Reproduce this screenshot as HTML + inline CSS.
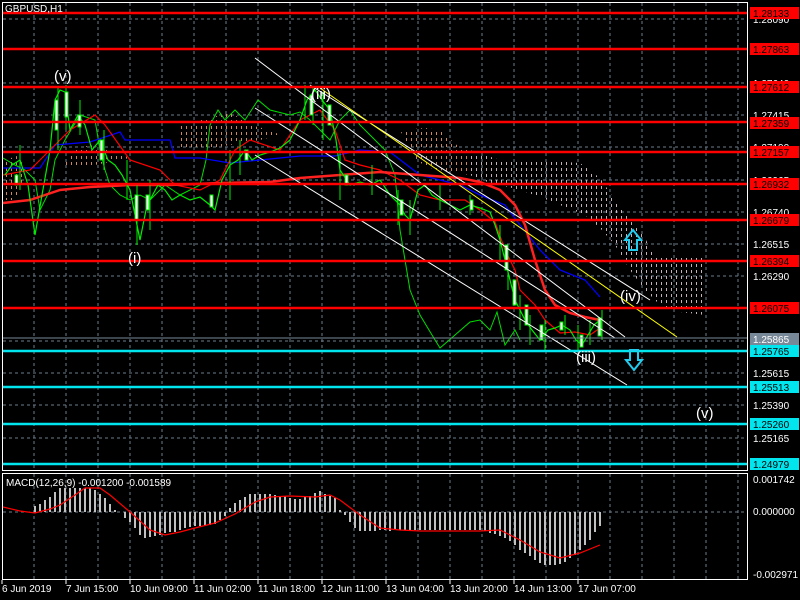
<!DOCTYPE html>
<html><head><meta charset="utf-8"><style>
html,body{margin:0;padding:0;background:#000;width:800px;height:600px;overflow:hidden;font-family:"Liberation Sans",sans-serif}
svg text{font-family:"Liberation Sans",sans-serif}
</style></head><body>
<svg width="800" height="600" xmlns="http://www.w3.org/2000/svg">
<defs>
<pattern id="pw" width="5" height="6" patternUnits="userSpaceOnUse"><rect x="1" y="0" width="1" height="3" fill="#e6d0dc"/></pattern>
<pattern id="po" width="5" height="6" patternUnits="userSpaceOnUse"><rect x="1" y="0" width="1" height="3" fill="#f0a070"/></pattern>
</defs>
<rect width="800" height="600" fill="#000"/>
<!-- grid -->
<g stroke="#6b7b8c" stroke-dasharray="3,3" stroke-width="1">
<path d="M34 3V470M66 3V470M98 3V470M130 3V470M162 3V470M194 3V470M226 3V470M258 3V470M290 3V470M322 3V470M354 3V470M386 3V470M418 3V470M450 3V470M482 3V470M514 3V470M546 3V470M578 3V470M610 3V470M642 3V470M674 3V470M706 3V470M738 3V470"/>
<path d="M34 474V579M66 474V579M98 474V579M130 474V579M162 474V579M194 474V579M226 474V579M258 474V579M290 474V579M322 474V579M354 474V579M386 474V579M418 474V579M450 474V579M482 474V579M514 474V579M546 474V579M578 474V579M610 474V579M642 474V579M674 474V579M706 474V579M738 474V579"/>
<path d="M3 19H747M3 83H747M3 115H747M3 147H747M3 180H747M3 212H747M3 244H747M3 276H747M3 341H747M3 373H747M3 405H747M3 438H747M3 512H747"/>
</g>
<!-- ichimoku cloud -->
<path d="M470 150 L500 160 L540 160 L580 163 L600 178 L615 200 L630 220 L645 238 L655 258 L705 258 L705 315 L680 312 L660 305 L645 290 L630 270 L615 245 L600 228 L585 215 L560 205 L540 197 L520 190 L500 185 L480 180 L470 175Z" fill="url(#pw)" opacity="0.85"/>
<path d="M400 130 L425 128 L440 130 L460 148 L470 150 L470 175 L450 172 L430 168 L415 160Z M180 125 L210 118 L230 112 L250 125 L270 130 L280 135 L260 140 L230 145 L200 150 L180 148Z M60 168 L75 150 L90 145 L110 150 L130 158 L110 162 L80 168Z M5 160 L20 155 L25 175 L15 200 L5 200Z" fill="url(#po)" opacity="0.85"/>
<!-- chikou (green line) -->
<polyline fill="none" stroke="#00dd00" stroke-width="1" points="3,158 15,165 25,170 35,180 40,210 50,190 55,160 65,140 80,115 95,120 100,150 105,170 110,185 120,195 130,200 140,195 150,200 165,185 180,195 200,185 206,160 210,125 218,110 225,120 235,110 245,120 258,100 270,110 290,115 300,112 310,120 320,130 330,140 340,120 350,110 360,125 370,135 385,150 395,175 400,230 405,260 410,290 420,315 432,335 440,348 455,335 470,322 480,320 490,330 497,312 505,345 515,330 520,340"/>
<!-- tenkan/kijun -->
<polyline fill="none" stroke="#0000ff" stroke-width="1.3" points="3,168 40,168 55,145 90,142 120,132 125,140 170,140 175,158 200,158 230,163 260,160 300,156 335,156 360,150 390,152 420,175 460,185 480,195 505,205 520,225 540,250 560,270 585,280 600,297"/>
<polyline fill="none" stroke="#ff0000" stroke-width="1.2" points="3,175 30,170 50,150 70,130 95,115 105,125 130,160 160,170 175,185 200,190 220,180 235,150 250,140 280,150 300,120 320,110 335,130 345,160 360,165 380,170 400,180 420,195 440,200 465,200 480,210 495,222 505,250 515,270 520,290 535,305 545,320 560,333 575,332 590,335 600,328"/>
<polyline fill="none" stroke="#ff2020" stroke-width="2.5" points="3,203 30,200 60,190 90,187 130,185 170,185 220,183 270,182 300,178 340,175 380,172 420,175 460,178 480,182 500,190 515,205 525,225 535,260 545,290 555,305 570,313 585,317 600,320"/>
<!-- candles (approx) -->
<polyline fill="none" stroke="#00ee00" stroke-width="1.2" points="5,175 12,165 20,160 28,185 35,235 42,195 50,150 55,100 60,90 65,92 70,130 78,115 85,125 92,150 100,140 108,160 115,165 122,175 130,190 135,215 140,240 146,210 150,200 158,185 165,190 172,200 180,195 190,200 200,197 210,205 215,210 222,180 230,165 238,160 245,150 252,160 260,155 270,152 280,148 290,140 300,120 307,100 315,90 322,100 330,110 336,140 340,170 350,185 360,182 370,185 380,180 390,195 400,205 405,215 410,220 418,190 425,185 432,195 440,200 450,205 460,210 470,205 480,208 490,212 495,225 500,240 505,260 510,280 515,300 520,310 525,320 532,330 540,340 548,330 555,328 562,325 570,330 576,340 582,345 588,335 594,325 600,320"/>
<g stroke="#00ee00" stroke-width="1"><path d="M20 145V190M58 88V150M66 85V130M80 100V135M104 130V170M127 160V200M137 185V245M150 180V230M230 150V200M240 140V175M305 85V120M313 88V125M323 92V140M340 150V200M372 165V195M398 190V225M410 200V235M440 185V210M470 195V215M500 225V260M508 250V290M520 295V330M530 315V345M545 320V350M565 315V335M578 325V350M590 320V345M602 310V340"/></g>
<g fill="#fff" stroke="#00ee00" stroke-width="1">
<rect x="15" y="175" width="3" height="10"/><rect x="55" y="100" width="3" height="30"/><rect x="65" y="92" width="3" height="25"/><rect x="78" y="115" width="3" height="12"/><rect x="100" y="140" width="3" height="20"/><rect x="135" y="195" width="3" height="25"/><rect x="146" y="195" width="3" height="15"/><rect x="210" y="195" width="3" height="12"/><rect x="245" y="150" width="3" height="10"/><rect x="310" y="95" width="3" height="20"/><rect x="328" y="105" width="3" height="20"/><rect x="345" y="175" width="3" height="10"/><rect x="400" y="200" width="3" height="15"/><rect x="470" y="200" width="3" height="10"/><rect x="505" y="245" width="3" height="25"/><rect x="513" y="280" width="3" height="25"/><rect x="525" y="305" width="3" height="20"/><rect x="540" y="325" width="3" height="15"/><rect x="560" y="322" width="3" height="8"/><rect x="580" y="335" width="3" height="12"/><rect x="598" y="318" width="3" height="18"/>
</g>
<!-- channel lines -->
<g stroke="#fff" stroke-width="1"><line x1="255" y1="58" x2="625" y2="337"/><line x1="255" y1="108" x2="615" y2="338"/><line x1="255" y1="155" x2="627" y2="385"/><line x1="310" y1="85" x2="650" y2="300"/></g>
<line x1="320" y1="88" x2="677" y2="337" stroke="#ffff00" stroke-width="1"/>
<!-- levels -->
<g stroke="#ff0000" stroke-width="2.5"><path d="M3 13H747M3 49H747M3 87H747M3 122H747M3 152H747M3 184H747M3 220H747M3 261H747M3 308H747"/></g>
<line x1="3" y1="338" x2="747" y2="338" stroke="#778899" stroke-width="1"/>
<g stroke="#00e5ee" stroke-width="2.5"><path d="M3 351H747M3 387H747M3 424H747M3 464H747"/></g>
<!-- arrows -->
<path d="M633 230 L641 240 L637 240 L637 250 L629 250 L629 240 L625 240Z" fill="none" stroke="#22ccee" stroke-width="2"/>
<path d="M630 350 L638 350 L638 360 L642 360 L634 370 L626 360 L630 360Z" fill="none" stroke="#22ccee" stroke-width="2"/>
<!-- wave labels -->
<g fill="#fff" font-size="15"><text x="54" y="81">(v)</text><text x="128" y="263">(i)</text><text x="311" y="99">(iii)</text><text x="576" y="362">(iii)</text><text x="620" y="301">(iv)</text><text x="696" y="418">(v)</text></g>
<!-- MACD -->
<g stroke="#c0c0c0" stroke-width="2">
<path d="M35 512V506M40 512V504M45 512V500M50 512V497M55 512V492M60 512V488M65 512V488M70 512V488M75 512V488M80 512V488M85 512V488M90 512V488M95 512V490M100 512V494M105 512V498M110 512V504M115 512V510M120 512V512"/>
<path d="M125 512V518M130 512V522M135 512V528M140 512V535M145 512V538M150 512V537M155 512V536M160 512V535M165 512V533M170 512V532M175 512V532M180 512V530M185 512V528M190 512V527M195 512V526M200 512V526M205 512V526M210 512V525M215 512V524M220 512V520M225 512V516"/>
<path d="M230 512V508M235 512V503M240 512V500M245 512V497M250 512V494M255 512V494M260 512V494M265 512V494M270 512V494M275 512V495M280 512V497M285 512V496M290 512V498M295 512V499M300 512V499M305 512V497M310 512V496M315 512V493M320 512V491M325 512V494M330 512V496M335 512V498M340 512V510"/>
<path d="M345 512V515M350 512V522M355 512V528M360 512V531M365 512V531M370 512V531M375 512V531M380 512V530M385 512V530M390 512V531M395 512V530M400 512V530M405 512V530M410 512V530M415 512V530M420 512V530M425 512V530M430 512V530M435 512V530M440 512V530M445 512V530M450 512V530M455 512V530M460 512V530M465 512V530M470 512V530M475 512V530M480 512V530M485 512V531M490 512V533M495 512V534M500 512V536M505 512V538M510 512V541M515 512V545M520 512V550M525 512V553M530 512V556M535 512V560M540 512V563M545 512V565M550 512V565M555 512V565M560 512V564M565 512V562M570 512V558M575 512V555M580 512V550M585 512V545M590 512V540M595 512V532M600 512V526"/>
</g>
<polyline fill="none" stroke="#ff0000" stroke-width="1.2" points="3,507 20,511 35,513 50,509 60,505 75,495 85,488 100,488 110,495 130,512 150,530 165,535 180,532 195,528 215,523 235,514 255,502 270,497 290,496 315,497 330,495 340,500 360,515 380,528 400,530 420,531 450,531 480,531 500,530 520,540 540,552 560,558 580,553 600,545"/>
<text x="6" y="486" fill="#fff" font-size="10">MACD(12,26,9) -0.001200 -0.001589</text>
<!-- frames -->
<g fill="none" stroke="#fff" stroke-width="1"><rect x="2.5" y="2.5" width="745" height="468"/><rect x="2.5" y="473.5" width="745" height="106"/></g>
<text x="5" y="12" fill="#fff" font-size="10">GBPUSD,H1</text>
<!-- right axis -->
<g fill="#fff" font-size="10">
<text x="753" y="23">1.28090</text><text x="753" y="87">1.27640</text><text x="753" y="119">1.27415</text><text x="753" y="151">1.27190</text><text x="753" y="184">1.26965</text><text x="753" y="216">1.26740</text><text x="753" y="248">1.26515</text><text x="753" y="280">1.26290</text><text x="753" y="377">1.25615</text><text x="753" y="409">1.25390</text><text x="753" y="442">1.25165</text>
<text x="753" y="483">0.001742</text><text x="753" y="515">0.000000</text><text x="753" y="578">-0.002971</text>
</g>
<g font-size="10">
<rect x="750" y="7" width="49" height="12" fill="#ff0000"/><text x="753" y="17">1.28133</text>
<rect x="750" y="43" width="49" height="12" fill="#ff0000"/><text x="753" y="53">1.27863</text>
<rect x="750" y="81" width="49" height="12" fill="#ff0000"/><text x="753" y="91">1.27612</text>
<rect x="750" y="117" width="49" height="12" fill="#ff0000"/><text x="753" y="127">1.27359</text>
<rect x="750" y="146" width="49" height="12" fill="#ff0000"/><text x="753" y="156">1.27157</text>
<rect x="750" y="178" width="49" height="12" fill="#ff0000"/><text x="753" y="188">1.26932</text>
<rect x="750" y="214" width="49" height="12" fill="#ff0000"/><text x="753" y="224">1.26679</text>
<rect x="750" y="255" width="49" height="12" fill="#ff0000"/><text x="753" y="265">1.26394</text>
<rect x="750" y="302" width="49" height="12" fill="#ff0000"/><text x="753" y="312">1.26075</text>
<rect x="750" y="333" width="49" height="12" fill="#778899"/><text x="753" y="343" fill="#fff">1.25865</text>
<rect x="750" y="345" width="49" height="12" fill="#00e5ee"/><text x="753" y="355">1.25765</text>
<rect x="750" y="381" width="49" height="12" fill="#00e5ee"/><text x="753" y="391">1.25513</text>
<rect x="750" y="418" width="49" height="12" fill="#00e5ee"/><text x="753" y="428">1.25260</text>
<rect x="750" y="458" width="49" height="12" fill="#00e5ee"/><text x="753" y="468">1.24979</text>
</g>
<!-- bottom axis -->
<g fill="#fff" font-size="10"><text x="2" y="592">6 Jun 2019</text><text x="66" y="592">7 Jun 15:00</text><text x="130" y="592">10 Jun 09:00</text><text x="194" y="592">11 Jun 02:00</text><text x="258" y="592">11 Jun 18:00</text><text x="322" y="592">12 Jun 11:00</text><text x="386" y="592">13 Jun 04:00</text><text x="450" y="592">13 Jun 20:00</text><text x="514" y="592">14 Jun 13:00</text><text x="578" y="592">17 Jun 07:00</text></g>
<g stroke="#fff"><path d="M2 580V584M66 580V584M130 580V584M194 580V584M258 580V584M322 580V584M386 580V584M450 580V584M514 580V584M578 580V584"/></g>
</svg>
</body></html>
